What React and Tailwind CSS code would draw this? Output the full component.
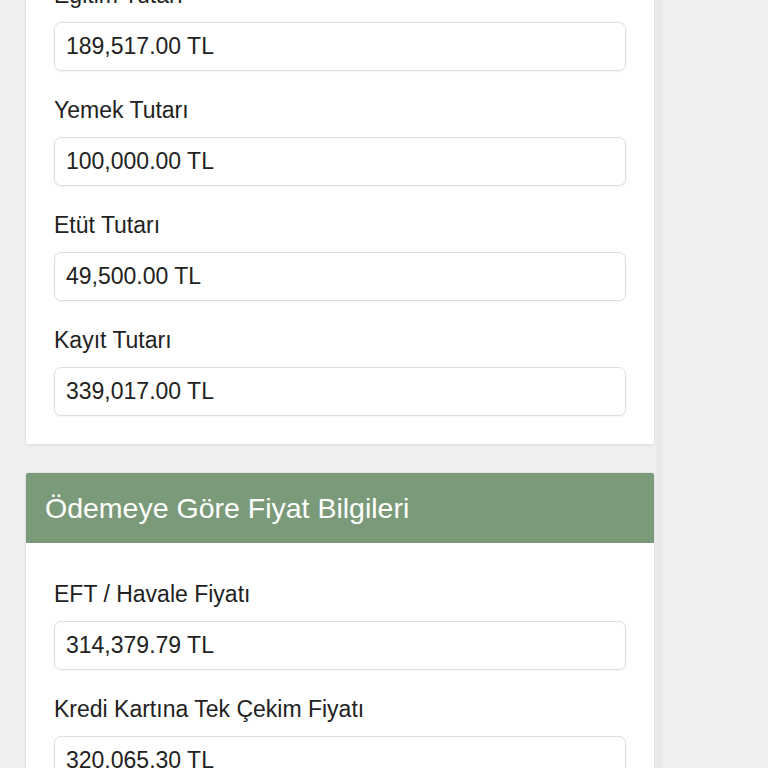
import React from 'react';

const font = { fontFamily: '"Liberation Sans", Arial, sans-serif' };

const tuitionFields = [
  { label: 'Eğitim Tutarı', value: '189,517.00 TL' },
  { label: 'Yemek Tutarı', value: '100,000.00 TL' },
  { label: 'Etüt Tutarı', value: '49,500.00 TL' },
  { label: 'Kayıt Tutarı', value: '339,017.00 TL' },
];

const paymentFields = [
  { label: 'EFT / Havale Fiyatı', value: '314,379.79 TL' },
  { label: 'Kredi Kartına Tek Çekim Fiyatı', value: '320,065.30 TL' },
  { label: 'Kredi Kartına Taksitli Fiyatı', value: '339,017.00 TL' },
];

const Field = ({ label, value, last }) => (
  <div className={last ? '' : 'mb-[26px]'}>
    <label className="block text-[23px] leading-[26px] text-[#222] mb-[14px]">{label}</label>
    <input
      readOnly
      value={value}
      className="block w-full h-[49px] px-[11px] text-[23px] text-[#222] bg-white border border-[#dedede] rounded-[7px] shadow-[0_1px_2px_rgba(0,0,0,0.05)] outline-none"
      style={font}
    />
  </div>
);

const Card = ({ title, fields }) => (
  <div className="bg-white border border-[#e2e2e2] rounded-[3px] shadow-[0_1px_2px_rgba(0,0,0,0.06)] overflow-hidden">
    {title && (
      <div className="h-[70px] flex items-center px-[19px] bg-[#7b9a79]">
        <h2 className="text-[28.5px] text-white">{title}</h2>
      </div>
    )}
    <div className={`px-[28px] pb-[28px] ${title ? 'pt-[38px]' : 'pt-[28px]'}`}>
      {fields.map((f, i) => (
        <Field key={f.label} label={f.label} value={f.value} last={i === fields.length - 1} />
      ))}
    </div>
  </div>
);

export default function App() {
  return (
    <div className="min-h-screen h-[768px] overflow-hidden bg-[#efefef]" style={font}>
      <div className="flex">
        <div className="w-[630px] ml-[25px] -mt-[47px] flex flex-col gap-[27px]">
          <Card fields={tuitionFields} />
          <Card title="Ödemeye Göre Fiyat Bilgileri" fields={paymentFields} />
        </div>
        <div className="w-[6px] ml-[1px] bg-[#e9e9e9]" />
      </div>
    </div>
  );
}
